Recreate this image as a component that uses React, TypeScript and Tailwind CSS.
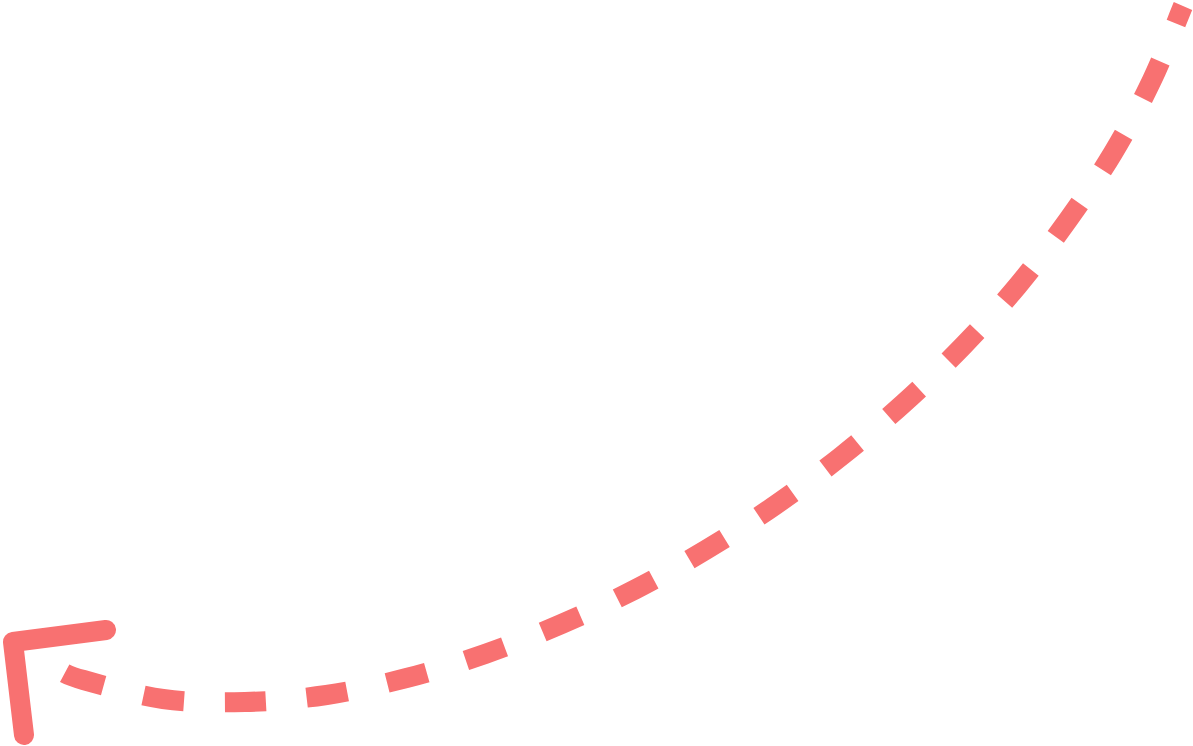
// Dashed curved arrow pointing back to the lower-left corner.

// Centres of the dashes read off the picture, from the top-right start to the arrow end.
const POINTS: [number, number][] = [
  [1183, 6],
  [1152, 80],
  [1113, 153],
  [1068, 220],
  [1017.5, 286],
  [963, 346],
  [904, 403],
  [841.5, 456],
  [775.5, 505],
  [706.5, 549.5],
  [635, 589.5],
  [561.5, 624],
  [485, 654],
  [406.5, 678],
  [326.5, 695],
  [245, 702],
  [163, 699],
  [83.5, 680],
  [62, 672],
];

// Catmull-Rom through the points, written out as cubic bezier segments
function smoothPath(pts: [number, number][]) {
  let d = `M ${pts[0][0]} ${pts[0][1]}`;
  for (let i = 0; i < pts.length - 1; i++) {
    const p0 = pts[i - 1] ?? pts[i];
    const p1 = pts[i];
    const p2 = pts[i + 1];
    const p3 = pts[i + 2] ?? p2;
    const c1x = p1[0] + (p2[0] - p0[0]) / 6;
    const c1y = p1[1] + (p2[1] - p0[1]) / 6;
    const c2x = p2[0] - (p3[0] - p1[0]) / 6;
    const c2y = p2[1] - (p3[1] - p1[1]) / 6;
    d += ` C ${c1x.toFixed(1)} ${c1y.toFixed(1)} ${c2x.toFixed(1)} ${c2y.toFixed(1)} ${p2[0]} ${p2[1]}`;
  }
  return d;
}

export default function App() {
  const curve = smoothPath(POINTS);

  return (
    <div className="w-[1193px] h-[746px] bg-white overflow-hidden">
      <svg width="1193" height="746" viewBox="0 0 1193 746" fill="none" className="block">
        <path
          d={curve}
          stroke="#f87171"
          strokeWidth={20}
          strokeDasharray="41 40.9"
          strokeDashoffset={22}
        />
        <polyline
          points="106,630 13,642 24,735"
          stroke="#f87171"
          strokeWidth={20}
          strokeLinecap="round"
          strokeLinejoin="round"
        />
      </svg>
    </div>
  );
}
